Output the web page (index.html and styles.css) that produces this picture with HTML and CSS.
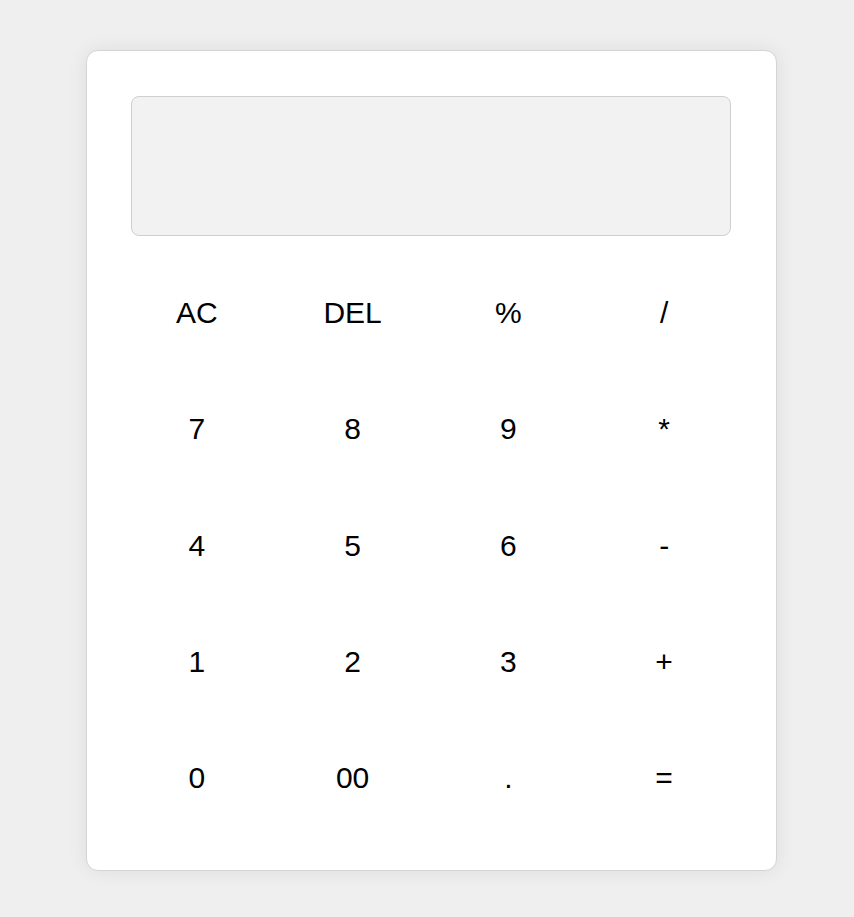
FILE: index.html
```html
<!DOCTYPE html>
<html lang="en">
<head>
<meta charset="utf-8">
<title>Calculator</title>
<link rel="stylesheet" href="styles.css">
</head>
<body>
<div class="calculator">
  <div class="display"></div>
  <div class="keys">
    <button class="key">AC</button>
    <button class="key">DEL</button>
    <button class="key">%</button>
    <button class="key">/</button>
    <button class="key">7</button>
    <button class="key">8</button>
    <button class="key">9</button>
    <button class="key">*</button>
    <button class="key">4</button>
    <button class="key">5</button>
    <button class="key">6</button>
    <button class="key">-</button>
    <button class="key">1</button>
    <button class="key">2</button>
    <button class="key">3</button>
    <button class="key">+</button>
    <button class="key">0</button>
    <button class="key">00</button>
    <button class="key">.</button>
    <button class="key">=</button>
  </div>
</div>
</body>
</html>
```
FILE: styles.css
```css
html, body {
  margin: 0;
  padding: 0;
}
body {
  background: #efefef;
  font-family: "Liberation Sans", Arial, sans-serif;
  min-height: 917px;
  padding-top: 50px;
  box-sizing: border-box;
}
.calculator {
  width: 691px;
  box-sizing: border-box;
  margin-left: 86px;
  background: #fff;
  border: 1px solid #d4d4d4;
  border-radius: 12px;
  padding: 45px 45px 45px 44px;
  box-shadow: 0 0 20px rgba(0, 0, 0, 0.08);
}
.display {
  height: 140px;
  box-sizing: border-box;
  background: #f2f2f2;
  border: 1px solid #cfcfcf;
  border-radius: 8px;
  margin-bottom: 30px;
}
.keys {
  display: grid;
  grid-template-columns: repeat(4, 1fr);
  grid-auto-rows: 94px;
  row-gap: 22.25px;
  column-gap: 22px;
  margin-left: -1px;
}
.key {
  background: transparent;
  border: none;
  font-family: "Liberation Sans", Arial, sans-serif;
  font-size: 30px;
  color: #000;
  padding: 0;
  cursor: pointer;
}
```
